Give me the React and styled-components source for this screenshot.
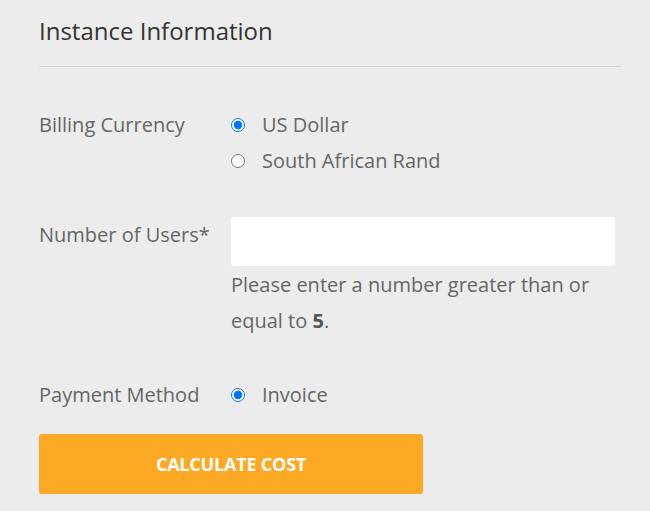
import styled, { createGlobalStyle } from 'styled-components';

const Global = createGlobalStyle`
    body {
        margin: 0;
        background: #ececec;
        font-family: 'Open Sans', 'Liberation Sans', sans-serif;
    }
`;

const Page = styled.div`
    padding: 16px 29px 0 39px;
    width: 582px;
`;

const Title = styled.h2`
    margin: 0;
    font-size: 24px;
    font-weight: 400;
    line-height: 30px;
    color: #333;
    padding-bottom: 20px;
    border-bottom: 1px solid #d6d6d6;
`;

const Form = styled.div`
    display: flex;
    flex-direction: column;
    gap: 38px;
    padding-top: 40px;
`;

const Row = styled.div`
    display: grid;
    grid-template-columns: 192px 1fr;
`;

const Label = styled.div`
    font-size: 20px;
    line-height: 36px;
    color: #666;
`;

const Options = styled.div`
    display: flex;
    flex-direction: column;
`;

const Option = styled.label`
    display: flex;
    align-items: center;
    font-size: 20px;
    line-height: 36px;
    color: #666;
`;

const Radio = styled.input.attrs({ type: 'radio' })`
    width: 14px;
    height: 14px;
    margin: 0 17px 0 0;
    accent-color: #0075ff;
`;

const Field = styled.input`
    box-sizing: border-box;
    width: 384px;
    height: 49px;
    border: 0;
    border-radius: 3px;
    background: #fff;
    margin-bottom: 1px;
`;

const Hint = styled.p`
    margin: 0;
    width: 384px;
    font-size: 20px;
    line-height: 36px;
    color: #666;

    b {
        color: #555;
    }
`;

const Button = styled.button`
    margin-top: 21px;
    width: 384px;
    height: 60px;
    border: 0;
    border-radius: 3px;
    background: #fda923;
    color: #fff;
    font-family: 'Open Sans', sans-serif;
    font-size: 18px;
    font-weight: 700;
    letter-spacing: -0.2px;
    text-transform: uppercase;
    box-shadow: 0 1px 1px rgba(0, 0, 0, 0.08);
`;

function App() {
    return (
        <>
            <Global />
            <Page>
                <Title>Instance Information</Title>
                <Form>
                    <Row>
                        <Label>Billing Currency</Label>
                        <Options>
                            <Option>
                                <Radio name="currency" defaultChecked />
                                US Dollar
                            </Option>
                            <Option>
                                <Radio name="currency" />
                                South African Rand
                            </Option>
                        </Options>
                    </Row>
                    <Row>
                        <Label>Number of Users*</Label>
                        <div>
                            <Field type="text" />
                            <Hint>
                                Please enter a number greater than or equal to <b>5</b>.
                            </Hint>
                        </div>
                    </Row>
                    <Row>
                        <Label>Payment Method</Label>
                        <Options>
                            <Option>
                                <Radio name="payment" defaultChecked />
                                Invoice
                            </Option>
                        </Options>
                    </Row>
                </Form>
                <Button>Calculate Cost</Button>
            </Page>
        </>
    );
}

export default App;
